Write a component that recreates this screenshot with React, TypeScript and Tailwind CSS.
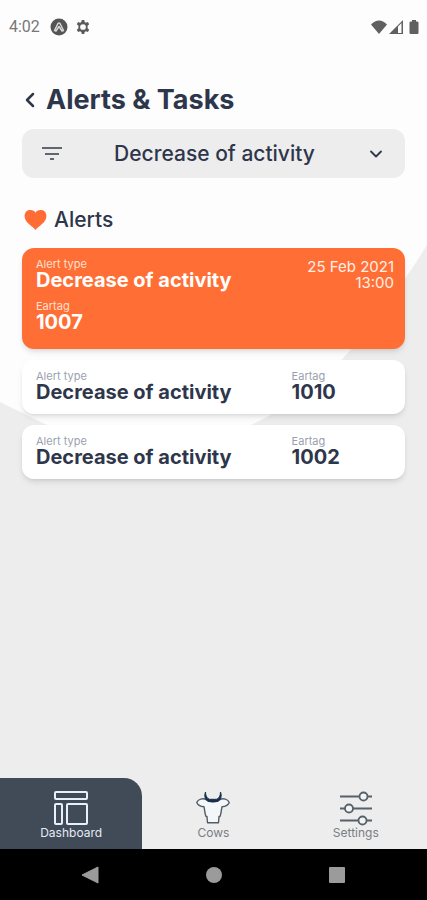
import type { ReactNode } from "react";
import { ChevronDown, ChevronLeft } from "lucide-react";

const ALERTS = [
  { type: "Decrease of activity", eartag: "1010" },
  { type: "Decrease of activity", eartag: "1002" },
];

function StatusBar() {
  return (
    <div className="flex h-[54px] items-center justify-between pr-2 pl-[9px]">
      <div className="flex items-center gap-2">
        <span className="w-[33px] font-[Roboto,sans-serif] text-base text-[#777]">4:02</span>
        <svg viewBox="0 0 18 18" className="size-[18px]">
          <circle cx="9" cy="9" r="8.5" fill="#555" />
          <path
            d="M4.5 12.5 8 5.5Q9 4.5 10 5.5L13.5 12.5 12 13 9 8.5 6 13Z"
            fill="none"
            stroke="#ddd"
            strokeWidth="1.4"
            strokeLinejoin="round"
          />
        </svg>
        <svg viewBox="1 1 22 22" className="size-[14px]" fill="#5b5b5b" fillRule="evenodd">
          <path d="M10 1h4l.6 3.2 2 1.2 3.1-1.1 2 3.5-2.5 2.1v4.2l2.5 2.1-2 3.5-3.1-1.1-2 1.2L14 23h-4l-.6-3.2-2-1.2-3.1 1.1-2-3.5 2.5-2.1V9.9L2.3 7.8l2-3.5 3.1 1.1 2-1.2ZM12 7.500a4.500 4.500 0 1 0 0 9 4.500 4.500 0 0 0 0-9Z" />
        </svg>
      </div>
      <div className="flex items-center gap-[2px]">
        <svg viewBox="0 0 16 14" className="h-[14px] w-4" fill="#606060">
          <path d="M0 4.500Q8-3.500 16 4.500L8 14Z" />
        </svg>
        <svg viewBox="0 0 14 14" className="size-[14px]" fill="#606060">
          <path fillRule="evenodd" d="M0 14 14 0v14ZM9 6.500V13h3.500V3Z" />
        </svg>
        <svg viewBox="0 0 10 14" className="ml-1 h-[14px] w-[10px]" fill="#606060">
          <path d="M3 0h4v1.500h1q1.500 0 1.500 1V13q0 1-1 1h-7q-1 0-1-1V2.500q0-1 1.500-1h1Z" />
        </svg>
      </div>
    </div>
  );
}

interface FieldProps {
  label: string;
  value: string;
  labelClass: string;
}

function Field({ label, value, labelClass }: FieldProps) {
  return (
    <div>
      <dt className={`text-[11px] leading-[11px] ${labelClass}`}>{label}</dt>
      <dd className="text-[20px] leading-[21px] font-bold">{value}</dd>
    </div>
  );
}

interface NavItemProps {
  label: string;
  active?: boolean;
  children: ReactNode;
}

function NavItem({ label, active, children }: NavItemProps) {
  return (
    <a
      href="#"
      aria-current={active ? "page" : undefined}
      className={`flex h-[71px] flex-1 flex-col items-center pt-3 text-[12px] leading-[14px] ${
        active ? "rounded-tr-[18px] bg-[#414a57] text-[#e4ebf5]" : "text-[#7a7d82]"
      }`}
    >
      {children}
      {label}
    </a>
  );
}

function BottomNav() {
  return (
    <nav className="flex">
      <NavItem label="Dashboard" active>
        <svg
          viewBox="0 0 36 36"
          className="size-9"
          fill="none"
          stroke="#e8effa"
          strokeWidth="2"
          strokeLinejoin="round"
        >
          <rect x="2" y="2" width="32" height="7" rx="1" />
          <rect x="2" y="14" width="7" height="20" rx="1" />
          <rect x="14" y="14" width="20" height="20" rx="1" />
        </svg>
      </NavItem>
      <NavItem label="Cows">
        <svg viewBox="0 0 36 36" className="size-9" fill="none" strokeLinejoin="round">
          <path
            d="M11 9.500C8 8 3 9 1.800 12.500 3 16 6 16.500 9 16.800c.8 3.200.7 6.700 2 9.700h1l.5 6.200h11l.5-6.200h1c1.300-3 1.200-6.500 2-9.700 3-.3 6-.8 7.200-4.300C33 9 28 8 25 9.500c-2 1.800-4 2.500-7 2.500s-5-.7-7-2.500Z"
            stroke="#555b62"
            strokeWidth="1.400"
            fill="#f4f7fa"
          />
          <path
            d="M10.500 2c-1.500 4-.5 8 3 9.500h9c3.500-1.500 4.500-5.500 3-9.500 0 4-1.500 6.500-4 7.300h-7C12 8.500 10.500 6 10.500 2Z"
            fill="#17304f"
            stroke="#17304f"
          />
        </svg>
      </NavItem>
      <NavItem label="Settings">
        <svg viewBox="0 0 36 36" className="size-9" fill="#f2f4f5" stroke="#56616a" strokeWidth="1.800">
          <path d="M2 6.500h32M2 18.500h32M2 30.500h32" />
          <circle cx="25.500" cy="6.500" r="4" />
          <circle cx="11" cy="18.500" r="4" />
          <circle cx="24.500" cy="30.500" r="4" />
        </svg>
      </NavItem>
    </nav>
  );
}

function SystemBar() {
  return (
    <div className="flex h-[51px] items-center bg-black px-7">
      <button type="button" aria-label="Back" className="flex flex-1 justify-center">
        <svg viewBox="0 0 18 18" className="size-[18px]" fill="#9b9b9b">
          <path d="M17 1v16L1 9Z" stroke="#9b9b9b" strokeLinejoin="round" />
        </svg>
      </button>
      <button type="button" aria-label="Home" className="flex flex-1 justify-center">
        <span className="size-4 rounded-full bg-[#9b9b9b]" />
      </button>
      <button type="button" aria-label="Recent apps" className="flex flex-1 justify-center">
        <span className="size-4 rounded-[1px] bg-[#9b9b9b]" />
      </button>
    </div>
  );
}

export default function App() {
  return (
    <div className="relative isolate flex min-h-screen flex-col overflow-hidden bg-[#ededed] font-[Inter,sans-serif] text-[#2e364b]">
      <svg
        viewBox="0 0 427 450"
        preserveAspectRatio="none"
        className="absolute top-0 left-0 -z-10 h-[450px] w-full"
        aria-hidden="true"
      >
        <path
          d="M0 0H427V245Q399 291 352 348Q312 396 253 424Q202 445 149 445Q95 445 45 424L0 402Z"
          fill="#fdfdfd"
        />
      </svg>

      <StatusBar />

      <main className="flex-1 px-[22px] pt-[30px]">
        <header className="flex items-center">
          <button type="button" aria-label="Go back" className="w-6">
            <ChevronLeft className="-ml-1 size-6" strokeWidth={2.5} />
          </button>
          <h1 className="text-[27px] leading-8 font-bold">Alerts &amp; Tasks</h1>
        </header>

        <div className="mt-[13px] flex h-[49px] items-center rounded-xl bg-[#ededed] px-[19px]">
          <svg viewBox="0 0 22 16" className="h-4 w-[22px]" stroke="#63666e" strokeWidth="2">
            <path d="M1 2h20M4 8h14M9 13h4" />
          </svg>
          <select
            aria-label="Filter alerts"
            className="h-full min-w-0 flex-1 appearance-none text-center text-[21px] font-medium [text-align-last:center]"
          >
            <option>Decrease of activity</option>
          </select>
          <ChevronDown className="pointer-events-none size-5" strokeWidth={2.2} />
        </div>

        <h2 className="mt-7 flex items-center gap-[7px] text-[21px] leading-7 font-medium">
          <svg viewBox="0 0 24 22" className="ml-[2px] h-5 w-[23px]" fill="#ff6d34">
            <path d="M12 22C9 18 0 14 0 7 0 2 3 0 6.500 0 9 0 11 1 12 3 13 1 15 0 17.500 0 21 0 24 2 24 7c0 7-9 11-12 15Z" />
          </svg>
          Alerts
        </h2>

        <div className="mt-[14px] flex flex-col gap-[11px]">
          <article className="flex h-[101px] justify-between rounded-xl bg-[#ff6f35] pt-[11px] pr-[11px] pl-[14px] text-white shadow-md">
            <dl className="flex flex-col gap-[10px]">
              <Field label="Alert type" value="Decrease of activity" labelClass="text-[#ffe0d2]" />
              <Field label="Eartag" value="1007" labelClass="text-[#ffe0d2]" />
            </dl>
            <time
              dateTime="2021-02-25T13:00"
              className="text-right text-[15px] leading-4 text-[#ffeee6]"
            >
              25 Feb 2021
              <br />
              13:00
            </time>
          </article>

          {ALERTS.map((alert) => (
            <article
              key={alert.eartag}
              className="rounded-xl bg-white px-[14px] py-[11px] shadow-md"
            >
              <dl className="grid grid-cols-[72%_28%]">
                <Field label="Alert type" value={alert.type} labelClass="text-[#9a9fb0]" />
                <Field label="Eartag" value={alert.eartag} labelClass="text-[#9a9fb0]" />
              </dl>
            </article>
          ))}
        </div>
      </main>

      <BottomNav />
      <SystemBar />
    </div>
  );
}
